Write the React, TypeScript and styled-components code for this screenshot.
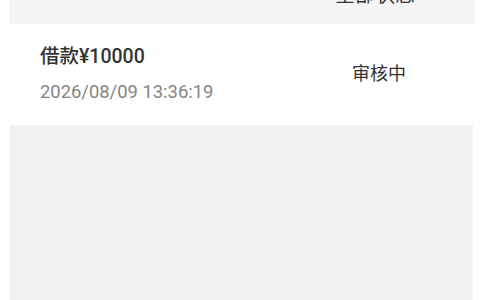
import React from "react";
import styled, { createGlobalStyle } from "styled-components";

const Global = createGlobalStyle`
  html, body { margin: 0; padding: 0; background: #ffffff; }
  body { font-family: Roboto, "Noto Sans CJK SC", sans-serif; overflow: hidden; }
`;

const Page = styled.div`
  width: 480px;
  height: 300px;
  display: flex;
  flex-direction: column;
  overflow: hidden;
`;

const FilterBar = styled.div`
  height: 24px;
  margin: 0 5px 0 9px;
  background: #f5f5f5;
  display: flex;
  justify-content: flex-end;
  overflow: hidden;
`;

const FilterLabel = styled.div`
  width: 200px;
  text-align: center;
  font-size: 20px;
  line-height: 24px;
  color: #333;
  margin-top: -18px;
  font-family: "Noto Sans CJK SC", sans-serif;
`;

const Row = styled.div`
  display: flex;
  align-items: flex-start;
  height: 101px;
  box-sizing: border-box;
  padding: 21px 0 0 40px;
`;

const Info = styled.div`
  flex: 1;
  display: flex;
  flex-direction: column;
  gap: 13px;
`;

const Title = styled.div`
  font-size: 19.5px;
  line-height: 24px;
  color: #333;
  font-weight: 500;
  font-family: Roboto, "Noto Sans CJK SC", sans-serif;
`;

const Time = styled.div`
  font-size: 18.4px;
  line-height: 20px;
  color: #858585;
  font-family: Roboto, "Noto Sans CJK SC", sans-serif;
`;

const Status = styled.div`
  align-self: center;
  margin-top: -27px;
  width: 202px;
  text-align: center;
  font-size: 18px;
  line-height: 24px;
  color: #333;
  font-family: "Noto Sans CJK SC", sans-serif;
`;

const Empty = styled.div`
  flex: 1;
  margin: 0 7px 0 10px;
  background: #f2f2f2;
`;

export default function App() {
  return (
    <>
      <Global />
      <Page>
        <FilterBar>
          <FilterLabel>全部状态</FilterLabel>
        </FilterBar>
        <Row>
          <Info>
            <Title>借款¥10000</Title>
            <Time>2026/08/09 13:36:19</Time>
          </Info>
          <Status>审核中</Status>
        </Row>
        <Empty />
      </Page>
    </>
  );
}
